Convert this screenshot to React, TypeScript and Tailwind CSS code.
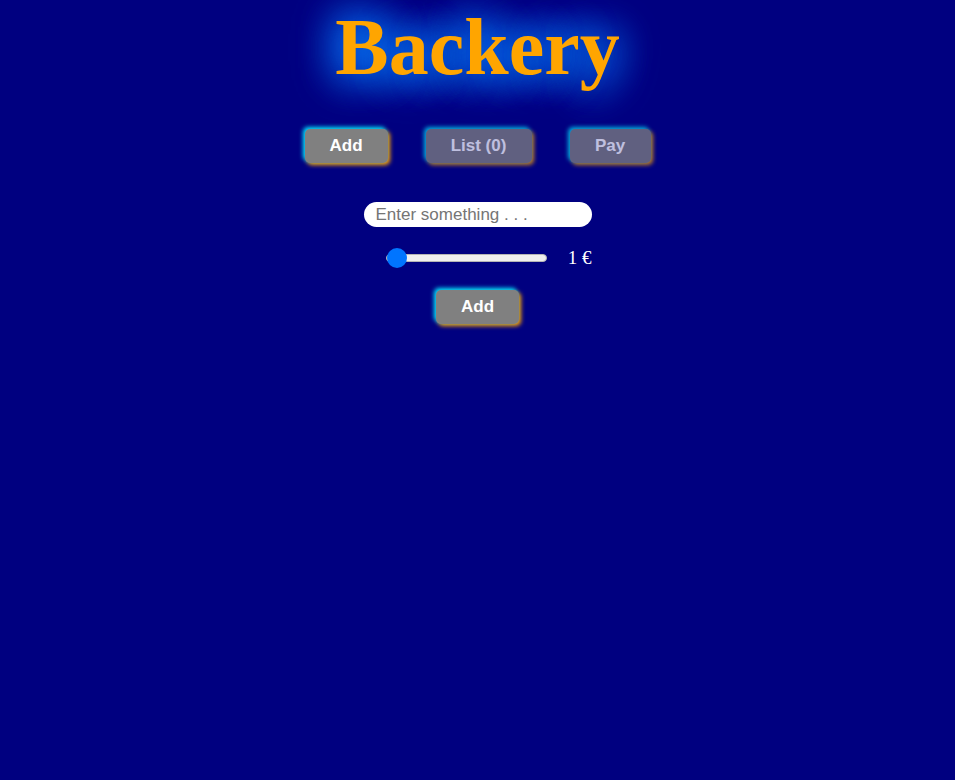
import { useState } from 'react';

const glow = "shadow-[-2px_-2px_4px_#00e5ff,2px_2px_4px_#ffa500]";

export default function App() {
  const [price, setPrice] = useState(1);
  const [name, setName] = useState('');

  return (
    <div className="min-h-screen w-full bg-[#000080] flex flex-col items-center font-['Liberation_Sans',Arial,sans-serif]">
      <h1 className="m-0 text-[80px] leading-[94px] font-bold text-[#ffa500] font-['Liberation_Serif','Times_New_Roman',serif] [text-shadow:0_0_40px_#0a7cff,0_0_40px_#0a7cff,0_0_50px_#0a6cf0]">
        Backery
      </h1>

      <nav className="mt-[35px] flex items-center gap-[38px]">
        <button className={`h-[34px] w-[83px] rounded-[5px] bg-[#808080] text-[17px] font-bold text-white ${glow}`}>Add</button>
        <button disabled className={`h-[34px] w-[106px] rounded-[5px] bg-[#808080] text-[17px] font-bold text-white opacity-75 ${glow}`}>List (0)</button>
        <button disabled className={`h-[34px] w-[81px] rounded-[5px] bg-[#808080] text-[17px] font-bold text-white opacity-75 ${glow}`}>Pay</button>
      </nav>

      <form className="mt-[39px] w-[228px] flex flex-col items-center" onSubmit={(e) => e.preventDefault()}>
        <input
          type="text"
          value={name}
          onChange={(e) => setName(e.target.value)}
          placeholder="Enter something . . ."
          className="h-[25px] w-[228px] rounded-full bg-white px-[12px] text-[17px] text-black outline-none placeholder:text-[#757575]"
        />
        <div className="mt-[17px] flex w-full items-center justify-end gap-[21px]">
          <input
            type="range"
            min={1}
            max={10}
            value={price}
            onChange={(e) => setPrice(Number(e.target.value))}
            className="m-0 h-[20px] w-[161px] cursor-pointer appearance-none bg-transparent [&::-webkit-slider-runnable-track]:h-[8px] [&::-webkit-slider-runnable-track]:rounded-full [&::-webkit-slider-runnable-track]:border [&::-webkit-slider-runnable-track]:border-[#b5b5b5] [&::-webkit-slider-runnable-track]:bg-[#efefef] [&::-webkit-slider-thumb]:mt-[-7px] [&::-webkit-slider-thumb]:h-[20px] [&::-webkit-slider-thumb]:w-[20px] [&::-webkit-slider-thumb]:appearance-none [&::-webkit-slider-thumb]:rounded-full [&::-webkit-slider-thumb]:bg-[#0075ff]"
          />
          <span className="text-[19px] text-white font-['Liberation_Serif','Times_New_Roman',serif]">{price} €</span>
        </div>
        <button className={`mt-[17px] h-[34px] w-[83px] rounded-[5px] bg-[#808080] text-[17px] font-bold text-white ${glow}`}>Add</button>
      </form>
    </div>
  );
}
